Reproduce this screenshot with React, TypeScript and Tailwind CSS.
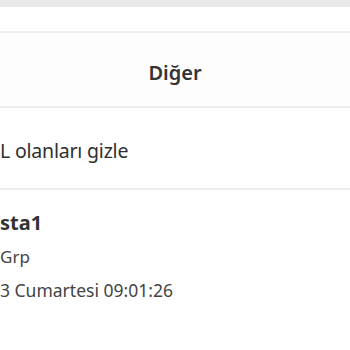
export default function App() {
  return (
    <div className="h-[350px] w-[350px] overflow-hidden bg-white font-['Noto_Sans',sans-serif] text-[#333]">
      <div className="h-[7px] bg-[#e9e9e9]" />
      <div className="h-[26px] border-b-2 border-[#eeeeee] bg-white" />
      <div className="flex h-[75px] items-center justify-center border-b-2 border-[#eeeeee] bg-[#fdfdfd] pt-[6px]">
        <h2 className="text-[20px] font-semibold text-[#333]">Diğer</h2>
      </div>
      <div className="flex h-[82px] items-center border-b-2 border-[#eeeeee] pt-[5px]">
        <span className="text-[19.5px] tracking-[-0.2px] text-[#2f2f2f]">L olanları gizle</span>
      </div>
      <div className="pt-[18px]">
        <p className="text-[20px] font-bold leading-[30px] text-[#333]">sta1</p>
        <p className="mt-[5px] text-[17px] leading-[28px] text-[#444]">Grp</p>
        <p className="mt-[5px] text-[17.5px] leading-[28px] text-[#444]">3 Cumartesi 09:01:26</p>
      </div>
    </div>
  );
}
